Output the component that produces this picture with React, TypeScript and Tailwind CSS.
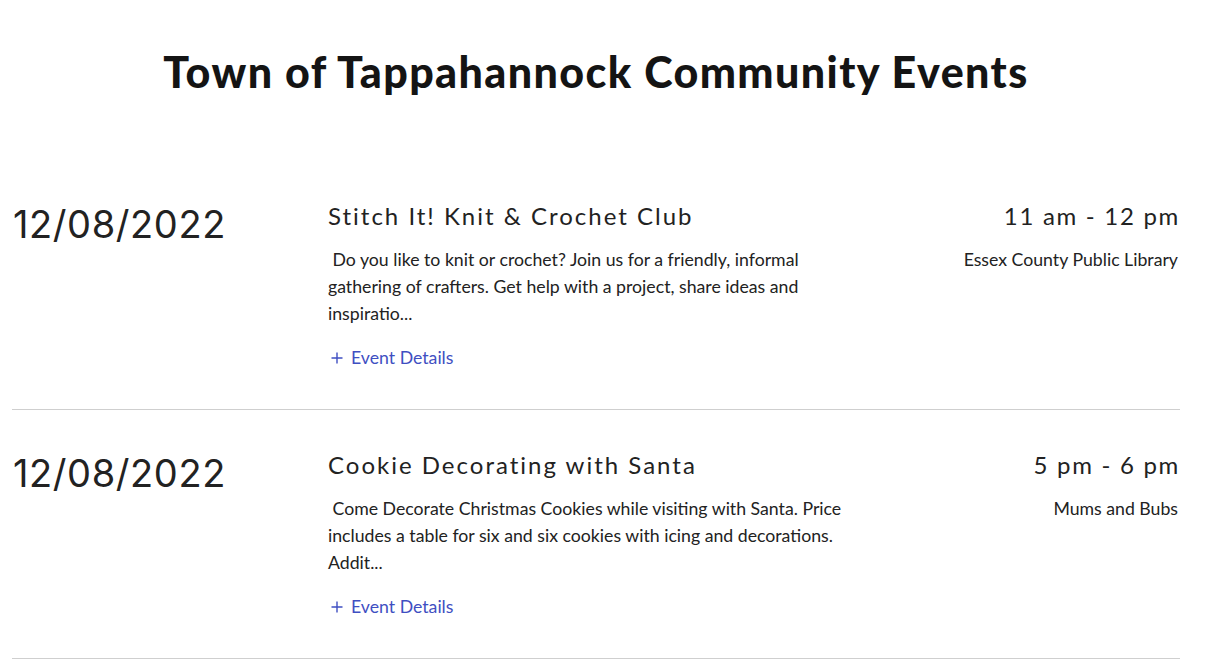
import React from 'react';

const events = [
  {
    date: '12/08/2022',
    title: 'Stitch It! Knit & Crochet Club',
    desc: '\u00a0Do you like to knit or crochet? Join us for a friendly, informal gathering of crafters. Get help with a project, share ideas and inspiratio...',
    time: '11 am - 12 pm',
    place: 'Essex County Public Library',
  },
  {
    date: '12/08/2022',
    title: 'Cookie Decorating with Santa',
    desc: '\u00a0Come Decorate Christmas Cookies while visiting with Santa. Price includes a table for six and six cookies with icing and decorations. Addit...',
    time: '5 pm - 6 pm',
    place: 'Mums and Bubs',
  },
];

export default function App() {
  return (
    <div className="min-h-screen bg-white text-[#1d1d1d]" style={{ fontFamily: 'Lato, sans-serif' }}>
      <h1 className="pt-[46px] pr-[25px] text-center text-[43px] font-black leading-[52px] tracking-[1.4px] text-[#141414]">
        Town of Tappahannock Community Events
      </h1>

      <div className="mx-[12px] mt-[92px] w-[1168px]">
        {events.map((e, i) => (
          <div key={i} className="flex border-b border-[#cfcfcf] pt-[10px] pb-[38px] mb-[29px]">
            <div className="w-[316px] shrink-0 pl-[1px] text-[38px] leading-[48px] tracking-[0.6px] text-[#222]" style={{ fontFamily: 'Inter, sans-serif', fontWeight: 400 }}>
              {e.date}
            </div>
            <div className="w-[530px] shrink-0">
              <h2 className="text-[24px] leading-[32px] tracking-[2px] text-[#222]">{e.title}</h2>
              <p className="mt-[14px] text-[17.7px] leading-[27px] text-[#222]">{e.desc}</p>
              <a className="mt-[17px] flex items-center gap-[8px] text-[17.7px] leading-[27px] text-[#3f4fc2]">
                <svg className="ml-[3px]" width="12" height="12" viewBox="0 0 12 12" fill="none" stroke="currentColor" strokeWidth="1.4">
                  <path d="M6 0.5v11M0.5 6h11" />
                </svg>
                <span>Event Details</span>
              </a>
            </div>
            <div className="flex-1 pr-[2px] text-right">
              <div className="mr-[-2px] text-[24px] leading-[32px] tracking-[1.7px] text-[#222]">{e.time}</div>
              <div className="mt-[14px] text-[17.7px] leading-[27px] text-[#222]">{e.place}</div>
            </div>
          </div>
        ))}
      </div>
    </div>
  );
}
